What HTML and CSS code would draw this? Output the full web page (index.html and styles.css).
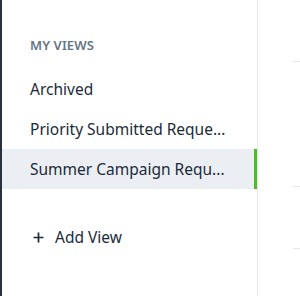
FILE: index.html
```html
<!DOCTYPE html>
<html>
<head>
<meta charset="utf-8">
<link rel="stylesheet" href="styles.css">
</head>
<body>
<div class="rail"></div>
<nav class="sidebar">
  <div class="heading">MY VIEWS</div>
  <ul class="views">
    <li class="view">Archived</li>
    <li class="view">Priority Submitted Reque...</li>
    <li class="view active">Summer Campaign Requ...</li>
  </ul>
  <div class="add">
    <svg class="plus" width="11" height="11" viewBox="0 0 11 11"><path d="M5.5 0.5v10M0.5 5.5h10" stroke="#1c2b39" stroke-width="1.7" fill="none"/></svg>
    <span>Add View</span>
  </div>
</nav>
<main class="main">
  <div class="line l1"></div>
  <div class="line l2"></div>
  <div class="line l3"></div>
</main>
</body>
</html>
```
FILE: styles.css
```css
html, body {
  margin: 0;
  padding: 0;
  background: #ffffff;
}
body {
  display: flex;
  height: 296px;
  overflow: hidden;
  font-family: "Noto Sans", "Open Sans", sans-serif;
  color: #1c2b39;
}
.rail {
  width: 2px;
  flex: none;
  background: #27323c;
}
.sidebar {
  width: 255px;
  flex: none;
  border-right: 1px solid #e4e7ed;
  padding-top: 37px;
  box-sizing: content-box;
}
.heading {
  padding-left: 28px;
  font-size: 13px;
  line-height: 16px;
  font-weight: 600;
  color: #667584;
  letter-spacing: 0.1px;
  margin-bottom: 16px;
}
.views {
  list-style: none;
  margin: 0;
  padding: 0;
}
.view {
  height: 40px;
  line-height: 40px;
  padding-left: 28px;
  padding-right: 28px;
  font-size: 15.5px;
  white-space: nowrap;
  overflow: hidden;
  text-overflow: ellipsis;
}
.view.active {
  background: #ebeef2;
  border-right: 3px solid #45c21e;
  padding-right: 25px;
}
.add {
  margin-top: 28px;
  height: 40px;
  display: flex;
  align-items: center;
  gap: 11px;
  padding-left: 31px;
  font-size: 15.5px;
}
.main {
  flex: 1;
  padding-left: 35px;
  position: relative;
}
.line {
  height: 1px;
  background: #e4e9ef;
}
.l1 { margin-top: 61px; }
.l2 { margin-top: 124px; }
.l3 { margin-top: 61px; }
```
